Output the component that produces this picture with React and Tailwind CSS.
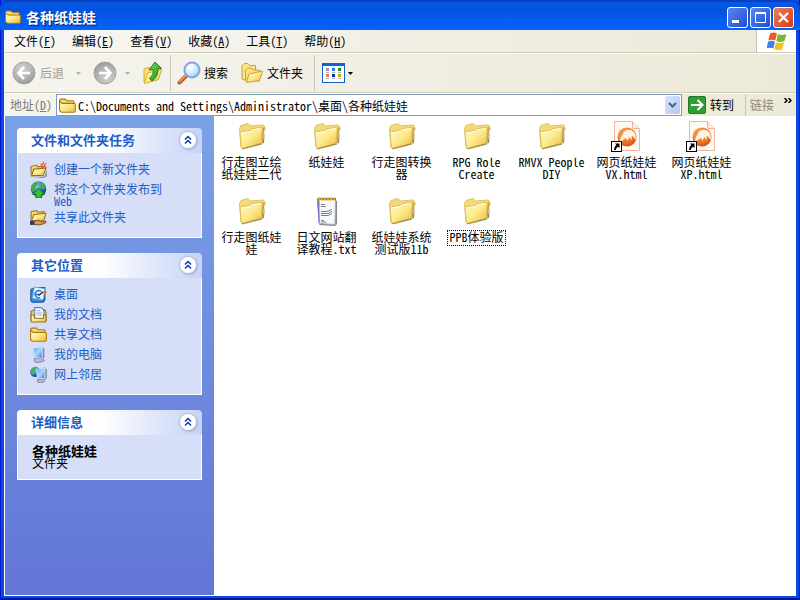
import { useState } from 'react';

const menus = [
  ['文件', 'F'],
  ['编辑', 'E'],
  ['查看', 'V'],
  ['收藏', 'A'],
  ['工具', 'T'],
  ['帮助', 'H'],
];

const files = [
  { name: ['行走图立绘', '纸娃娃二代'], icon: 'folder' },
  { name: ['纸娃娃'], icon: 'folder' },
  { name: ['行走图转换', '器'], icon: 'folder' },
  { name: ['RPG Role', 'Create'], icon: 'folder' },
  { name: ['RMVX People', 'DIY'], icon: 'folder' },
  { name: ['网页纸娃娃', 'VX.html'], icon: 'html' },
  { name: ['网页纸娃娃', 'XP.html'], icon: 'html' },
  { name: ['行走图纸娃', '娃'], icon: 'folder' },
  { name: ['日文网站翻', '译教程.txt'], icon: 'txt' },
  { name: ['纸娃娃系统', '测试版11b'], icon: 'folder' },
  { name: ['PPB体验版'], icon: 'folder', focused: true },
];

function Gradients() {
  return (
    <svg className="absolute h-0 w-0" aria-hidden="true">
      <defs>
        <linearGradient id="gold" x1="0" y1="0" x2="1" y2="1">
          <stop offset="0" stopColor="#fffbd0" />
          <stop offset="0.5" stopColor="#fdea8b" />
          <stop offset="1" stopColor="#e8b93c" />
        </linearGradient>
        <linearGradient id="screen" x1="0" y1="0" x2="1" y2="1">
          <stop offset="0" stopColor="#4f9bf0" />
          <stop offset="0.5" stopColor="#a5dcff" />
          <stop offset="1" stopColor="#2f74d8" />
        </linearGradient>
        <radialGradient id="globe" cx="0.35" cy="0.3" r="0.8">
          <stop offset="0" stopColor="#8fd0ff" />
          <stop offset="0.6" stopColor="#1c67c9" />
          <stop offset="1" stopColor="#0a2f7c" />
        </radialGradient>
        <radialGradient id="lens" cx="0.35" cy="0.3" r="0.8">
          <stop offset="0" stopColor="#ffffff" />
          <stop offset="0.6" stopColor="#c4eafc" />
          <stop offset="1" stopColor="#86c4f4" />
        </radialGradient>
        <radialGradient id="gray" cx="0.4" cy="0.3" r="0.8">
          <stop offset="0" stopColor="#d2d2d0" />
          <stop offset="0.6" stopColor="#b2b2b0" />
          <stop offset="1" stopColor="#8f8f8d" />
        </radialGradient>
        <radialGradient id="orange" cx="0.4" cy="0.3" r="0.8">
          <stop offset="0" stopColor="#fbb25c" />
          <stop offset="0.6" stopColor="#ee7420" />
          <stop offset="1" stopColor="#c94a0c" />
        </radialGradient>
        <linearGradient id="green" x1="0" y1="0" x2="1" y2="1">
          <stop offset="0" stopColor="#7fe05f" />
          <stop offset="1" stopColor="#118a12" />
        </linearGradient>
      </defs>
    </svg>
  );
}

function SmallFolder({ size = 16 }) {
  return (
    <svg width={size} height={size} viewBox="0 0 16 16" className="shrink-0" aria-hidden="true">
      <path d="M0.500 12.500V3.500Q0.500 2 2 2H6L7.500 3.500H13Q14.200 3.500 14.200 4.800V6" fill="#f7d96c" stroke="#a87a16" />
      <path d="M0.500 4L3 6H14Q15.400 6 15.400 7.300V13Q15.400 14.300 14 14.300H3Q0.500 14 0.500 12z" fill="url(#gold)" stroke="#a87a16" />
    </svg>
  );
}

function BigFolder() {
  return (
    <svg width="32" height="32" viewBox="0 0 32 32" aria-hidden="true">
      <path d="M7 29.500L26 24.500L29.500 8.500L29 7.500L28 23L8 29z" fill="#66665e" opacity="0.8" />
      <path d="M3.500 8.500L5 5.500L12 3.500L14.500 6L26.500 5Q28.500 5 28.500 7L26 23L5 27z" fill="#f5d978" stroke="#e0c063" />
      <path d="M26.500 8L28.500 7L26.500 23L25 24z" fill="#c99f32" />
      <path d="M4 13Q4 12 5 11.800L14 10.500L16 8.700L25 7.500Q26.500 7.500 26.300 9L25.200 23.500L6.500 28.500Q5.500 28.800 5.400 27.500z" fill="url(#gold)" stroke="#dfbd55" />
      <path d="M5 13L14.500 11.500L16.500 9.700L25 8.600" stroke="#fffef0" fill="none" />
      <path d="M6 28.800L25 23.800" stroke="#a98a2c" fill="none" />
    </svg>
  );
}

function HtmlIcon() {
  return (
    <svg width="32" height="32" viewBox="0 0 32 32" aria-hidden="true">
      <path d="M3.500 1.500H21.500L28.500 8.500V30.500H3.500z" fill="#fffaf5" stroke="#f2b498" />
      <path d="M21.500 1.500V8.500H28.500" fill="#ffe9dc" stroke="#f2b498" />
      <circle cx="16" cy="17" r="9.500" fill="url(#orange)" />
      <path d="M9 22Q9 15 14 11Q19 8 23 12Q25.500 15 24.500 20Q22 15.500 20.500 16L21 20L18 17L17 20.500L14.500 18Q11 20 9 24z" fill="#fff3e4" />
      <path d="M8 16Q8 10 14 8Q11 12 12 14Q9 17 9 20z" fill="#f3924a" />
      <rect x="0.500" y="21.500" width="10" height="10" fill="#fff" stroke="#000" />
      <path d="M4 23.500H8.500V28L7 26.700Q4.800 28 4.800 30H3Q3 26.500 5.300 25z" fill="#000" />
    </svg>
  );
}

function TxtIcon() {
  return (
    <svg width="32" height="32" viewBox="0 0 32 32" aria-hidden="true">
      <path d="M8 30L24 31L26 29V6L24 5z" fill="#85858c" />
      <path d="M6.500 3.500H24.500L24 29.500L8.500 28.500z" fill="#f8f9fd" stroke="#a5abc4" />
      <path d="M6 3.500L7.500 28.500L8.500 28.500V4z" fill="#7b75c9" />
      <path d="M7 4H25" stroke="#6b5a3a" strokeWidth="1.500" />
      <path d="M8 2V6M11 2V6M14 2V6M17 2V6M20 2V6M23 2V6" stroke="#edbb28" strokeWidth="1.500" />
      <path d="M10 9.500H14M10 11.500H15M10 16.500H16L21 14.500M10 18.500H17L21 16.500M10 20.500H17L21 18.500M10 25.500H13M10 27H15" stroke="#7a7f8a" fill="none" />
    </svg>
  );
}

function FileIcon({ type }) {
  if (type === 'html') return <HtmlIcon />;
  if (type === 'txt') return <TxtIcon />;
  return <BigFolder />;
}

function NewFolderIcon() {
  return (
    <svg width="17" height="17" viewBox="0 0 16 16" aria-hidden="true">
      <path d="M3 15L14 14.500L15.500 8L16 14L13 16z" fill="#4a4a4a" opacity="0.6" />
      <path d="M1 13V5L6 4L7.500 5.500L12 5V8" fill="#f7d96c" stroke="#9a7324" />
      <path d="M1.500 14L3.500 7.800L15 6.500L12.500 13.500z" fill="url(#gold)" stroke="#8a6720" />
      <path d="M12.500 0L13.300 2.500L16 2L14 4L15.500 6.500L12.800 5.200L10.500 7L11 4.300L9 2.800L11.600 2.600z" fill="#ee4a1c" />
      <circle cx="12.500" cy="3.600" r="1" fill="#ffd34d" />
    </svg>
  );
}

function PublishIcon() {
  return (
    <svg width="17" height="17" viewBox="0 0 16 16" aria-hidden="true">
      <circle cx="8" cy="7.500" r="7.300" fill="url(#globe)" />
      <path d="M1 5Q3 1 6.500 1L8 3L5 5.500L6 8L3 10Q0.500 8 1 5zM10 1Q14.500 2.500 15 7L12 8L10 5z" fill="#43b045" />
      <path d="M8 7L14 12.500H11V16H5.500V12.500H2.500z" fill="#36c02c" stroke="#0d6b14" strokeWidth="0.800" />
    </svg>
  );
}

function ShareIcon() {
  return (
    <svg width="17" height="17" viewBox="0 0 16 16" aria-hidden="true">
      <path d="M1 10V2.500L6 1.500L7.500 3L13 2.500V5" fill="#f7d96c" stroke="#9a7324" />
      <path d="M1.500 11L3.500 5.500L15 4L13 11z" fill="url(#gold)" stroke="#9a7324" />
      <path d="M0 11H4V15H0z" fill="#31405e" />
      <path d="M4 11.500L8 10.500L10 12L15 11.500Q15.500 13 14 13.500L9 15L4 14.500z" fill="#d99a63" stroke="#6b3e1d" strokeWidth="0.800" />
    </svg>
  );
}

function DesktopIcon() {
  return (
    <svg width="17" height="17" viewBox="0 0 16 16" aria-hidden="true">
      <path d="M2 3L4 1H14.500V13L13 15.500H1.500z" fill="#1a5fae" />
      <rect x="0.800" y="2.500" width="12" height="12.500" rx="1.500" fill="#3a93e2" stroke="#174f94" />
      <path d="M4 1L14 2.500L12.500 13L2.500 11.500z" fill="#eef8ff" stroke="#5fa5e0" strokeWidth="0.700" />
      <path d="M10.500 5.200A3.400 3.400 0 1 0 9.700 10.800M5.500 8H9" stroke="#2476c4" strokeWidth="1.300" fill="none" />
      <path d="M8 9L12.500 5.500" stroke="#234" strokeWidth="1.300" />
      <path d="M12 5.500L14.500 4L16 6L13.500 7.500z" fill="#e77729" />
    </svg>
  );
}

function DocumentsIcon() {
  return (
    <svg width="17" height="17" viewBox="0 0 16 16" aria-hidden="true">
      <path d="M1 14V5L4 3.500H14L15 6V14z" fill="#f3cf5e" stroke="#94701d" />
      <path d="M4.500 12V1.500H10.500L13 4V12z" fill="#fff" stroke="#4c84c4" />
      <path d="M6 4.500H10M6 6.500H11.500M6 8.500H11.500" stroke="#7fb0e4" />
      <path d="M1 8.500H3.500L4.500 11.500H12.500L13 8.500H15V14Q15 15 14 15H2Q1 15 1 14z" fill="url(#gold)" stroke="#94701d" />
    </svg>
  );
}

function ComputerIcon() {
  return (
    <svg width="17" height="17" viewBox="0 0 16 16" aria-hidden="true">
      <path d="M4 12L11 11L13.500 14L7 16L4 14.500z" fill="#b9b7cd" stroke="#77759a" strokeWidth="0.700" />
      <path d="M3 2L11.500 0.500L13.500 2.500V11L11.500 12.500L4 12z" fill="#7f86b4" />
      <path d="M3 2L11.500 0.800V11.500L4.500 11z" fill="url(#screen)" stroke="#e2ebfa" strokeWidth="0.800" />
    </svg>
  );
}

function NetworkIcon() {
  return (
    <svg width="17" height="17" viewBox="0 0 16 16" aria-hidden="true">
      <circle cx="5" cy="5.500" r="4.900" fill="url(#globe)" />
      <path d="M1 3.500Q3 0.500 6 1L5 4L3 5.500L4 8L2 8Q0 6 1 3.500z" fill="#45b448" />
      <path d="M7 13L12.500 12L14 14.500L10 16L7 15z" fill="#b9b7cd" stroke="#77759a" strokeWidth="0.700" />
      <path d="M6 3L14 1.500L15.800 3.500V11.500L14.500 13L7 12.300z" fill="#7f86b4" />
      <path d="M6 3L14 2V12L7 11.300z" fill="url(#screen)" stroke="#e2ebfa" strokeWidth="0.800" />
    </svg>
  );
}

function CircleArrow({ flip }) {
  return (
    <svg width="24" height="24" viewBox="0 0 24 24" className={flip ? 'rotate-180' : ''} aria-hidden="true">
      <circle cx="12" cy="12" r="11" fill="url(#gray)" stroke="#a5a5a2" />
      <path d="M18 12H7M12 6L6.500 12L12 18" stroke="#fff" strokeWidth="2.600" fill="none" />
    </svg>
  );
}

function UpFolderIcon() {
  return (
    <svg width="22" height="24" viewBox="0 0 22 24" aria-hidden="true">
      <path d="M2 21V8L7 6.500L9 8L15 7V19z" fill="#f9e07a" stroke="#d8ac35" />
      <path d="M2.500 22.500L5.500 12L19.500 8.500L16.500 18.500z" fill="url(#gold)" stroke="#d8ac35" />
      <path d="M13 1L19.500 7.500L16 7.800Q16 16 10 20L7.500 17.500Q12 14 11.500 8.500L7 9z" fill="url(#green)" stroke="#17851a" />
    </svg>
  );
}

function SearchIcon() {
  return (
    <svg width="24" height="24" viewBox="0 0 24 24" aria-hidden="true">
      <path d="M2.500 21.500L9.500 14.500" stroke="#b9602c" strokeWidth="4" strokeLinecap="round" />
      <path d="M2.500 20.500L8.500 14.500" stroke="#f3a765" strokeWidth="1.500" strokeLinecap="round" />
      <circle cx="15" cy="9" r="7.500" fill="url(#lens)" stroke="#84a6de" strokeWidth="2" />
    </svg>
  );
}

function FoldersIcon() {
  return (
    <svg width="24" height="22" viewBox="0 0 24 22" aria-hidden="true">
      <path d="M2 17V3.500L4 1.500H8L9.500 3.500H15.500V15L3 18z" fill="#f9e48a" stroke="#d0a035" />
      <path d="M5.500 19V8L7.500 6H11.500L13 8H19.500V19z" fill="#f9e07a" stroke="#d0a035" />
      <path d="M6.500 20.500L9 12L22.500 9L19.500 18.500z" fill="url(#gold)" stroke="#d0a035" />
    </svg>
  );
}

function ViewsIcon() {
  return (
    <svg width="23" height="20" viewBox="0 0 23 20" aria-hidden="true">
      <rect x="0.500" y="0.500" width="22" height="19" fill="#fff" stroke="#1661c8" />
      <path d="M0 0H23V3H0z" fill="#1661c8" />
      <path d="M4 5H7V8H4z" fill="#9a94cc" />
      <path d="M10 5H13V8H10z" fill="#2b7de0" />
      <path d="M16 5H19V8H16z" fill="#129a1c" />
      <path d="M4 11H7V14H4z" fill="#f07a55" />
      <path d="M10 11H13V14H10z" fill="#0b2f9a" />
      <path d="M16 11H19V14H16z" fill="#d0a010" />
      <path d="M4 9.500H7M10 9.500H13M16 9.500H19M4 15.500H7M10 15.500H13M16 15.500H19" stroke="#b4b4b4" />
    </svg>
  );
}

function WindowsFlag() {
  return (
    <svg width="20" height="19" viewBox="0 0 20 19" aria-hidden="true">
      <path d="M3 1.500Q6.500 -0.500 10 1.500L8.300 8.500Q5 6.800 1.300 8.500z" fill="#ee5a24" />
      <path d="M11 2Q15 3.800 19.500 2L17.500 9Q13.500 10.800 9.300 9z" fill="#72b92c" />
      <path d="M1 9.700Q4.500 8 8 9.700L6.300 16.500Q3 14.800 -0.500 16.500z" fill="#3f83e0" />
      <path d="M9 10.200Q13 12 17.200 10.200L15.300 17.200Q11.500 19 7.300 17.200z" fill="#f9bf1e" />
    </svg>
  );
}

function Caret({ className }) {
  return (
    <svg width="5" height="3" viewBox="0 0 5 3" className={className} aria-hidden="true">
      <path d="M0 0H5L2.500 3z" fill="currentColor" />
    </svg>
  );
}

function Pane({ title, className = '', children }) {
  const [open, setOpen] = useState(true);
  return (
    <section>
      <div className="flex h-[25px] items-center justify-between rounded-t bg-linear-to-r from-white from-45% to-[#c6d3f7] pr-1.5 pb-0.5 pl-3.5">
        <h2 className="text-[13px] leading-4 font-bold text-[#215dc6]">{title}</h2>
        <button
          type="button"
          aria-label={title}
          aria-expanded={open}
          onClick={() => setOpen(!open)}
          className="flex h-4 w-4 items-center justify-center rounded-full bg-white shadow-[0_0_1px_1px_#b4bfdf,1px_1px_2px_1px_#a9b5da]"
        >
          <svg width="8" height="10" viewBox="0 0 8 10" className={open ? '' : 'rotate-180'} aria-hidden="true">
            <path d="M1 4.500L4 1.500L7 4.500M1 8.500L4 5.500L7 8.500" stroke="#0c35a8" strokeWidth="1.500" fill="none" />
          </svg>
        </button>
      </div>
      {open && <div className={`border border-t-0 border-white bg-[#d6dff7] ${className}`}>{children}</div>}
    </section>
  );
}

function TaskLink({ icon, children }) {
  return (
    <li>
      <a href="#" className="flex items-start gap-[7px] leading-3 text-[#215dc6] hover:underline">
        <span className="-mb-1 h-[17px] w-[17px] shrink-0">{icon}</span>
        <span>{children}</span>
      </a>
    </li>
  );
}

function TitleButton({ label, className, children }) {
  return (
    <button
      type="button"
      aria-label={label}
      className={`flex h-[21px] w-[21px] items-center justify-center rounded-[3px] border border-white ${className}`}
    >
      <svg width="19" height="19" viewBox="0 0 19 19" fill="none" stroke="#fff" aria-hidden="true">
        {children}
      </svg>
    </button>
  );
}

export default function App() {
  const [address, setAddress] = useState('C:\\Documents and Settings\\Administrator\\桌面\\各种纸娃娃');

  return (
    <div className="flex min-h-screen flex-col bg-[#0a48e4] font-['Noto_Sans_Mono_CJK_SC','Noto_Sans_CJK_SC','Liberation_Mono',monospace] text-xs leading-3 text-black shadow-[inset_1px_0_#0019cf,inset_-1px_0_#0019cf,inset_0_-2px_#00149b]">
      <Gradients />
      <header className="flex h-[30px] items-center gap-1 rounded-t-lg bg-linear-to-b from-[#0a5be8] via-[#0453e0] via-30% to-[#0463fb] pt-1 pr-1.5 pl-[5px] shadow-[inset_0_2px_1px_#0a3fc0]">
        <SmallFolder />
        <h1 className="grow pl-px text-sm leading-4 font-bold text-white [text-shadow:1px_1px_1px_#0f1f6e]">各种纸娃娃</h1>
        <div className="flex gap-0.5">
          <TitleButton label="最小化" className="bg-linear-to-br from-[#5b86f2] to-[#1c4cd4]">
            <path d="M4 13.500H11" strokeWidth="3" />
          </TitleButton>
          <TitleButton label="最大化" className="bg-linear-to-br from-[#5b86f2] to-[#1c4cd4]">
            <path d="M4.500 4.500H14.500V14.500H4.500zM4 5.500H15" />
          </TitleButton>
          <TitleButton label="关闭" className="bg-linear-to-br from-[#ec7f5c] to-[#cf3a12]">
            <path d="M5 5L14 14M14 5L5 14" strokeWidth="2.200" />
          </TitleButton>
        </div>
      </header>

      <div className="mx-1 mb-1 flex grow flex-col bg-[#ece9d8]">
        <nav className="flex h-[23px] items-stretch border-b border-[#d0ccb8] bg-linear-to-r from-[#f7f6f2] to-[#ece9d8]">
          <div className="flex grow items-center gap-4 pl-2.5">
            {menus.map(([name, key]) => (
              <button key={key} type="button" className="whitespace-nowrap">
                {name}(<u>{key}</u>)
              </button>
            ))}
          </div>
          <div className="flex w-10 items-center justify-center border-l border-[#c5c2b0] bg-white">
            <WindowsFlag />
          </div>
        </nav>

        <div className="flex h-10 items-center border-y border-t-white border-b-[#d0ccb8] bg-linear-to-r from-[#f5f4ee] to-[#ece9d8] pl-2">
          <button type="button" disabled className="flex items-center gap-1 text-[#a09d8c]">
            <CircleArrow />
            <span>后退</span>
            <Caret className="ml-2 text-[#b5b2a2]" />
          </button>
          <button type="button" disabled className="ml-3 flex items-center gap-2 text-[#b5b2a2]" aria-label="前进">
            <CircleArrow flip />
            <Caret />
          </button>
          <button type="button" className="ml-3" aria-label="向上">
            <UpFolderIcon />
          </button>
          <div className="ml-1.5 h-9 border-l border-[#c9c5b2]" />
          <button type="button" className="ml-1.5 flex items-center gap-[3px]">
            <SearchIcon />
            <span>搜索</span>
          </button>
          <button type="button" className="ml-3 flex items-center gap-[3px]">
            <FoldersIcon />
            <span>文件夹</span>
          </button>
          <div className="ml-[11px] h-9 border-l border-[#c9c5b2]" />
          <button type="button" className="ml-[7px] flex items-center gap-[3px]" aria-label="查看方式">
            <ViewsIcon />
            <Caret />
          </button>
        </div>

        <div className="flex h-[23px] items-stretch border-t border-white bg-linear-to-r from-[#f5f4ee] to-[#ece9d8]">
          <label htmlFor="address" className="flex w-[52px] shrink-0 items-center pl-1.5 text-[#7f7c6e]">
            地址(<u>D</u>)
          </label>
          <div className="flex min-w-0 grow items-center border border-[#7f9db9] bg-white pr-px pl-0.5">
            <SmallFolder size={17} />
            <input
              id="address"
              type="text"
              value={address}
              onChange={e => setAddress(e.target.value)}
              className="ml-0.5 h-4 min-w-0 grow outline-none"
            />
            <button
              type="button"
              aria-label="地址列表"
              className="flex h-[18px] w-[15px] items-center justify-center rounded-xs bg-linear-to-br from-[#dbe5fd] to-[#b3c7f7]"
            >
              <svg width="9" height="6" viewBox="0 0 9 6" aria-hidden="true">
                <path d="M1 1L4.500 4.500L8 1" stroke="#4d6185" strokeWidth="2" fill="none" />
              </svg>
            </button>
          </div>
          <button type="button" className="ml-1.5 flex items-center gap-1">
            <svg width="18" height="18" viewBox="0 0 18 18" aria-hidden="true">
              <rect x="0.500" y="0.500" width="17" height="17" rx="1.500" fill="#2f9e34" stroke="#1c7a22" />
              <path d="M3 9H14M9.500 4L14.500 9L9.500 14" stroke="#fff" strokeWidth="2" fill="none" />
            </svg>
            <span>转到</span>
          </button>
          <div className="ml-[11px] flex w-[51px] shrink-0 items-start border-l border-[#c9c5b2] pl-1">
            <span className="self-center text-[#8b8878]">链接</span>
            <button type="button" aria-label="更多链接" className="mt-1 ml-2.5">
              <svg width="8" height="5" viewBox="0 0 8 5" aria-hidden="true">
                <path d="M0.500 0L3 2.500L0.500 5M4.500 0L7 2.500L4.500 5" stroke="#000" strokeWidth="1.500" fill="none" />
              </svg>
            </button>
          </div>
        </div>

        <div className="flex grow border-b border-l border-white bg-white">
          <aside className="flex w-[209px] shrink-0 flex-col gap-[15px] bg-linear-to-b from-[#7ba2e7] to-[#6375d6] p-3 pb-4">
            <Pane title="文件和文件夹任务" className="pt-2 pb-3 pl-3">
              <ul className="flex flex-col gap-0.5">
                <TaskLink icon={<NewFolderIcon />}>
                  <span className="block pt-0.5 pb-1">创建一个新文件夹</span>
                </TaskLink>
                <TaskLink icon={<PublishIcon />}>
                  <span className="block pt-0.5">
                    将这个文件夹发布到
                    <br />
                    Web
                  </span>
                </TaskLink>
                <TaskLink icon={<ShareIcon />}>
                  <span className="block pt-0.5 pb-0.5">共享此文件夹</span>
                </TaskLink>
              </ul>
            </Pane>
            <Pane title="其它位置" className="pt-2 pb-3 pl-3">
              <ul className="flex flex-col gap-1">
                {[
                  ['桌面', <DesktopIcon />],
                  ['我的文档', <DocumentsIcon />],
                  ['共享文档', <SmallFolder size={17} />],
                  ['我的电脑', <ComputerIcon />],
                  ['网上邻居', <NetworkIcon />],
                ].map(([name, icon]) => (
                  <TaskLink key={name} icon={icon}>
                    <span className="block pt-0.5 pb-0.5">{name}</span>
                  </TaskLink>
                ))}
              </ul>
            </Pane>
            <Pane title="详细信息" className="pt-2.5 pb-2.5 pl-3.5">
              <p className="text-[13px] leading-3 font-bold">各种纸娃娃</p>
              <p>文件夹</p>
            </Pane>
          </aside>

          <main className="min-w-0 grow pt-1">
            <ul className="grid grid-cols-[repeat(auto-fill,75px)]">
              {files.map(file => (
                <li key={file.name.join('')} className="h-[75px]">
                  <button type="button" className="flex w-full flex-col items-center gap-1">
                    <FileIcon type={file.icon} />
                    <span
                      className={`px-px pb-0.5 text-center whitespace-nowrap ${file.focused ? 'outline outline-dotted outline-black' : ''}`}
                    >
                      {file.name.map(line => (
                        <span key={line} className="block">
                          {line}
                        </span>
                      ))}
                    </span>
                  </button>
                </li>
              ))}
            </ul>
          </main>
        </div>
      </div>
    </div>
  );
}
